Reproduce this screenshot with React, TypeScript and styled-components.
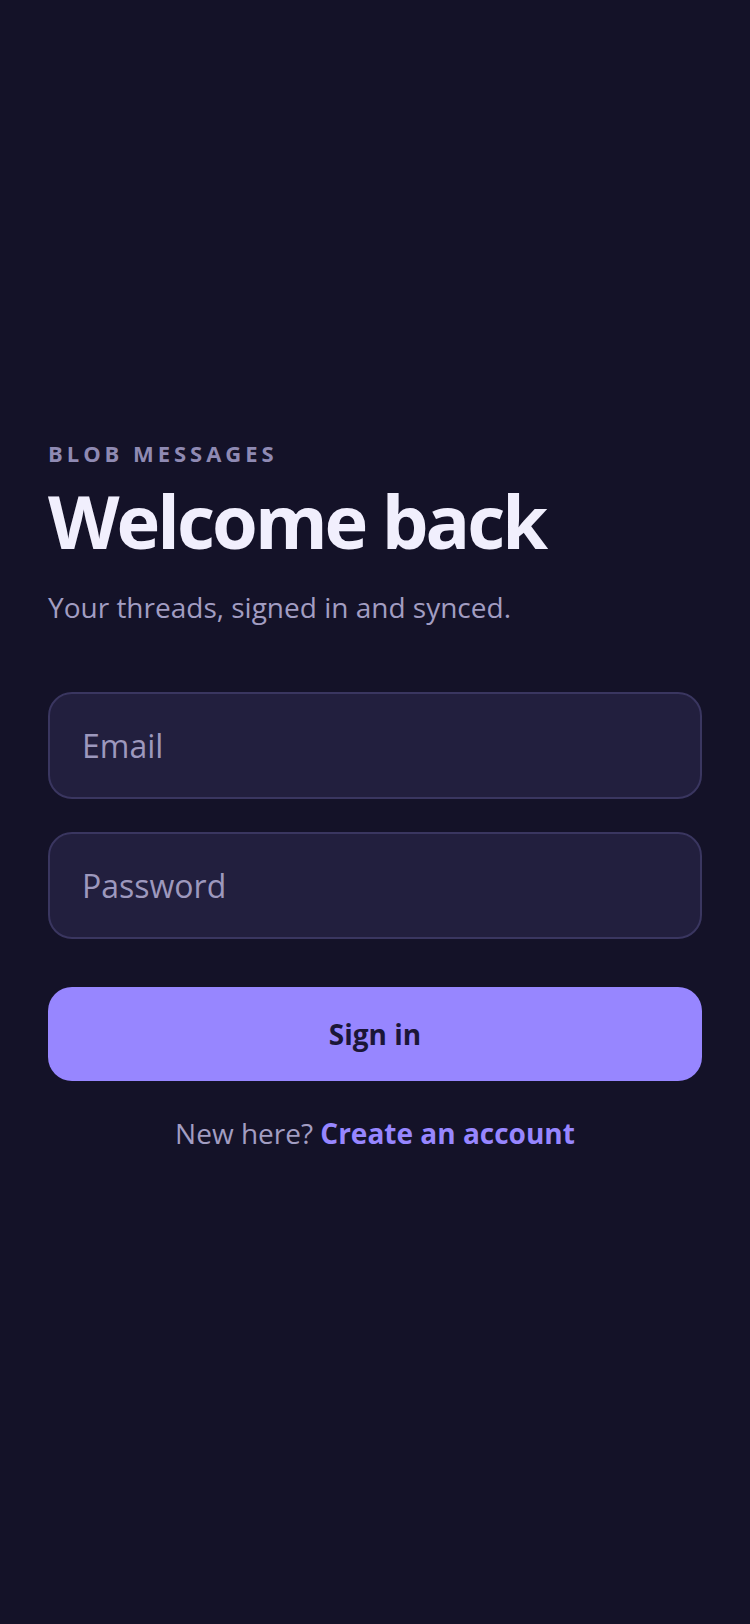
import { createGlobalStyle, styled } from 'styled-components';

const GlobalStyle = createGlobalStyle`
  * { box-sizing: border-box; }
  html, body { margin: 0; padding: 0; background: #141228; }
  body { font-family: 'Open Sans', 'Noto Sans', sans-serif; }
`;

const Page = styled.main`
  min-height: 100vh;
  display: flex;
  flex-direction: column;
  justify-content: center;
  padding: 0 48px 33px;
  background: #141228;
`;

const Eyebrow = styled.div`
  font-size: 22px;
  font-weight: 700;
  letter-spacing: 0.18em;
  line-height: 1.3;
  color: #8f8ab3;
  text-transform: uppercase;
`;

const Title = styled.h1`
  margin: 10px 0 0;
  font-size: 74px;
  font-weight: 700;
  letter-spacing: -0.04em;
  line-height: 1.2;
  color: #f1effd;
`;

const Subtitle = styled.p`
  margin: 22px 0 0;
  font-size: 28px;
  line-height: 1.4;
  color: #a29dc2;
`;

const Form = styled.form`
  display: flex;
  flex-direction: column;
  gap: 33px;
  margin-top: 65px;
`;

const Field = styled.input`
  height: 107px;
  width: 100%;
  padding: 0 32px;
  border: 2px solid #3a3660;
  border-radius: 24px;
  background: #221f3e;
  font-family: inherit;
  font-size: 32px;
  color: #f1effd;
  outline: none;

  &::placeholder {
    color: #9d98bd;
  }
`;

const Submit = styled.button`
  height: 94px;
  margin-top: 15px;
  border: none;
  border-radius: 24px;
  background: #9786ff;
  font-family: inherit;
  font-size: 28px;
  font-weight: 700;
  color: #1b1637;
  cursor: pointer;
`;

const Footer = styled.p`
  margin: 33px 0 0;
  text-align: center;
  font-size: 28px;
  color: #a29dc2;
`;

const Link = styled.a`
  font-weight: 700;
  color: #9786ff;
  text-decoration: none;
`;

const App = () => {
  return (
    <>
      <GlobalStyle />
      <Page>
        <Eyebrow>Blob Messages</Eyebrow>
        <Title>Welcome back</Title>
        <Subtitle>Your threads, signed in and synced.</Subtitle>
        <Form onSubmit={(e) => e.preventDefault()}>
          <Field type="email" placeholder="Email" />
          <Field type="password" placeholder="Password" />
          <Submit type="submit">Sign in</Submit>
        </Form>
        <Footer>
          New here? <Link href="#">Create an account</Link>
        </Footer>
      </Page>
    </>
  );
};

export default App;
